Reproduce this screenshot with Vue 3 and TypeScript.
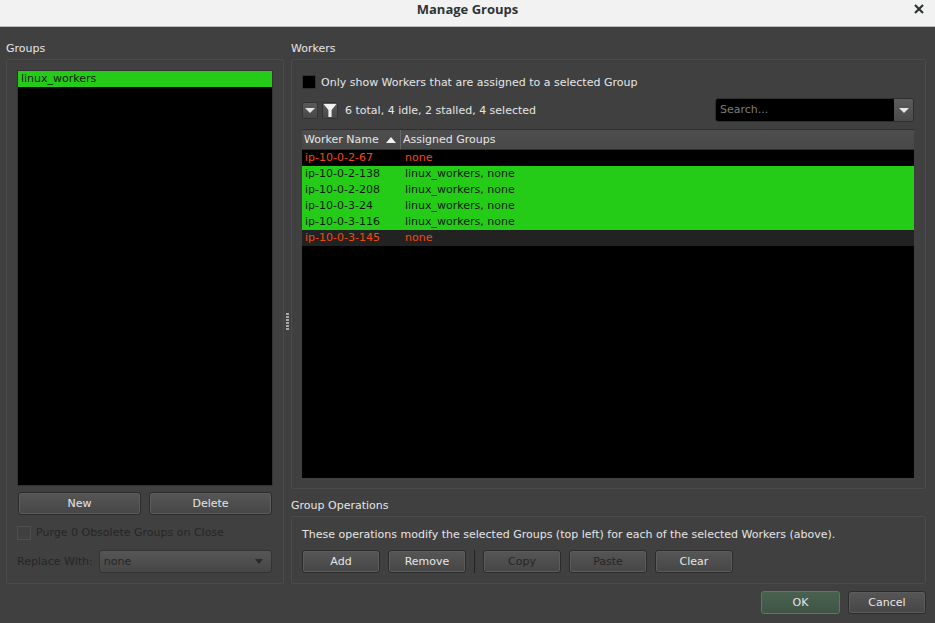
<script setup lang="ts">
interface Worker {
  name: string
  groups: string
  state: 'stalled' | 'selected'
  alt?: boolean
}

const workers: Worker[] = [
  { name: 'ip-10-0-2-67', groups: 'none', state: 'stalled' },
  { name: 'ip-10-0-2-138', groups: 'linux_workers, none', state: 'selected' },
  { name: 'ip-10-0-2-208', groups: 'linux_workers, none', state: 'selected' },
  { name: 'ip-10-0-3-24', groups: 'linux_workers, none', state: 'selected' },
  { name: 'ip-10-0-3-116', groups: 'linux_workers, none', state: 'selected' },
  { name: 'ip-10-0-3-145', groups: 'none', state: 'stalled', alt: true },
]
</script>

<template>
  <div class="dialog">
    <header class="titlebar">
      <span class="title">Manage Groups</span>
      <svg class="close" width="10" height="10" viewBox="0 0 10 10">
        <path d="M1 1 L9 9 M9 1 L1 9" stroke="#2e3436" stroke-width="2.2" fill="none" />
      </svg>
    </header>

    <div class="content">
      <div class="main">
        <section class="left">
          <div class="label">Groups</div>
          <div class="panel left-panel">
            <div class="group-list">
              <div class="group-row">linux_workers</div>
            </div>
            <div class="btn-row">
              <button class="btn grow">New</button>
              <button class="btn grow">Delete</button>
            </div>
            <div class="purge">
              <span class="check check-off"></span>
              <span class="off">Purge 0 Obsolete Groups on Close</span>
            </div>
            <div class="replace">
              <span class="off">Replace With:</span>
              <div class="combo">
                <span>none</span>
                <span class="tri tri-dim"></span>
              </div>
            </div>
          </div>
        </section>

        <div class="splitter">
          <i v-for="n in 6" :key="n"></i>
        </div>

        <section class="right">
          <div class="label">Workers</div>
          <div class="panel workers-panel">
            <div class="only">
              <span class="check"></span>
              <span>Only show Workers that are assigned to a selected Group</span>
            </div>
            <div class="toolbar">
              <button class="tool"><span class="tri"></span></button>
              <button class="tool">
                <svg width="14" height="14" viewBox="0 0 14 14">
                  <path d="M0.5 1 H13.5 L8.6 7 V14 H5.4 V7 Z" fill="#f0f0f0" />
                </svg>
              </button>
              <span class="stats">6 total, 4 idle, 2 stalled, 4 selected</span>
              <div class="search">
                <span class="search-input">Search...</span>
                <span class="search-btn"><span class="tri"></span></span>
              </div>
            </div>
            <div class="table">
              <div class="thead">
                <div class="th th-name">
                  <span>Worker Name</span>
                  <span class="tri tri-up"></span>
                </div>
                <div class="th">Assigned Groups</div>
              </div>
              <div
                v-for="w in workers"
                :key="w.name"
                class="tr"
                :class="[w.state, { alt: w.alt }]"
              >
                <div class="td-name">{{ w.name }}</div>
                <div class="td-groups">{{ w.groups }}</div>
              </div>
            </div>
          </div>

          <div class="label ops-label">Group Operations</div>
          <div class="panel ops-panel">
            <div class="ops-text">These operations modify the selected Groups (top left) for each of the selected Workers (above).</div>
            <div class="ops-row">
              <button class="btn ops">Add</button>
              <button class="btn ops">Remove</button>
              <span class="sep"></span>
              <button class="btn ops disabled">Copy</button>
              <button class="btn ops disabled">Paste</button>
              <button class="btn ops">Clear</button>
            </div>
          </div>
        </section>
      </div>

      <footer class="footer">
        <button class="btn foot ok">OK</button>
        <button class="btn foot">Cancel</button>
      </footer>
    </div>
  </div>
</template>

<style scoped>
.dialog {
  width: 935px;
  height: 623px;
  display: flex;
  flex-direction: column;
  overflow: hidden;
  background: #404040;
  color: #e6e6e6;
  font-family: "DejaVu Sans", sans-serif;
  font-size: 11px;
}

.titlebar {
  flex: none;
  height: 27px;
  box-sizing: border-box;
  position: relative;
  display: flex;
  align-items: center;
  justify-content: center;
  background: #f2f2f2;
  border-bottom: 1px solid #bdbdbd;
}

.title {
  font-family: "Open Sans", sans-serif;
  font-size: 13px;
  font-weight: 700;
  color: #2e3436;
  margin-top: -8px;
}

.close {
  position: absolute;
  right: 11px;
  top: 4px;
}

.content {
  flex: 1;
  display: flex;
  flex-direction: column;
  padding: 0 9px 0 6px;
}

.main {
  height: 557px;
  display: flex;
}

.left {
  width: 278px;
  display: flex;
  flex-direction: column;
}

.right {
  width: 635px;
  display: flex;
  flex-direction: column;
}

.splitter {
  width: 7px;
  display: flex;
  flex-direction: column;
  align-items: center;
  justify-content: center;
  gap: 1px;
  padding-top: 32px;
  box-sizing: border-box;
}

.splitter i {
  width: 3px;
  height: 2px;
  background: #a8a8a8;
}

.label {
  height: 32px;
  box-sizing: border-box;
  padding-top: 15px;
  line-height: 14px;
  color: #e6e6e6;
}

.ops-label {
  height: 27px;
  padding-top: 10px;
}

.panel {
  box-sizing: border-box;
  border: 1px solid #4b4b4b;
  border-radius: 2px;
}

.left-panel {
  flex: 1;
  padding: 10px 10px 0;
  display: flex;
  flex-direction: column;
}

.group-list {
  height: 416px;
  background: #000;
  border: 1px solid #333;
  box-sizing: border-box;
}

.group-row {
  height: 16px;
  line-height: 16px;
  padding-left: 3px;
  background: #24cc18;
  color: #0a1a08;
}

.btn-row {
  display: flex;
  gap: 8px;
  margin: 6px 1px 0;
}

.btn {
  box-sizing: border-box;
  height: 23px;
  padding: 0;
  font: inherit;
  color: #e6e6e6;
  background: linear-gradient(#565656, #464646);
  border: 1px solid #2c2c2c;
  border-radius: 3px;
  box-shadow: inset 0 0 0 1px #5c5c5c;
}

.grow {
  flex: 1;
}

.purge {
  display: flex;
  align-items: center;
  gap: 5px;
  margin-top: 10px;
  height: 15px;
}

.off {
  color: #262626;
}

.check {
  display: block;
  box-sizing: border-box;
  width: 14px;
  height: 14px;
  background: #000;
  border: 1px solid #333;
}

.check-off {
  background: #404040;
  border-color: #4f4f4f;
}

.replace {
  display: flex;
  align-items: center;
  gap: 6px;
  margin-top: 10px;
}

.combo {
  box-sizing: border-box;
  flex: 1;
  height: 23px;
  display: flex;
  align-items: center;
  justify-content: space-between;
  padding: 0 8px 0 4px;
  color: #262626;
  background: linear-gradient(#565656, #464646);
  border: 1px solid #333;
  border-radius: 3px;
  margin-right: 1px;
}

.tri {
  display: block;
  width: 0;
  height: 0;
  border-left: 5px solid transparent;
  border-right: 5px solid transparent;
  border-top: 5px solid #e6e6e6;
}

.tri-dim {
  border-top-color: #2a2a2a;
  border-left-width: 4px;
  border-right-width: 4px;
}

.tri-up {
  border-top: 0;
  border-bottom: 6px solid #f0f0f0;
}

.workers-panel {
  height: 430px;
  padding: 15px 11px 0 10px;
}

.only {
  display: flex;
  align-items: center;
  gap: 5px;
  height: 14px;
}

.toolbar {
  position: relative;
  display: flex;
  align-items: center;
  gap: 4px;
  height: 24px;
  margin-top: 9px;
}

.tool {
  box-sizing: border-box;
  width: 16px;
  height: 17px;
  padding: 0;
  display: flex;
  align-items: center;
  justify-content: center;
  background: linear-gradient(#5a5a5a, #484848);
  border: 1px solid #333;
  border-radius: 2px;
}

.stats {
  margin-left: 3px;
}

.search {
  margin-left: auto;
  width: 199px;
  height: 24px;
  display: flex;
  box-sizing: border-box;
  border: 1px solid #2e2e2e;
  border-radius: 3px;
  overflow: hidden;
}

.search-input {
  flex: 1;
  background: #000;
  color: #7c7c7c;
  line-height: 22px;
  padding-left: 4px;
}

.search-btn {
  width: 19px;
  display: flex;
  align-items: center;
  justify-content: center;
  background: linear-gradient(#5c5c5c, #4a4a4a);
}

.table {
  height: 349px;
  margin-top: 7px;
  background: #000;
}

.thead {
  display: flex;
  height: 21px;
  box-sizing: border-box;
  background: linear-gradient(#4e4e4e, #484848);
  border-top: 1px solid #2e2e2e;
  border-bottom: 1px solid #2e2e2e;
}

.th {
  display: flex;
  align-items: center;
  padding-left: 2px;
}

.th-name {
  width: 99px;
  box-sizing: border-box;
  justify-content: space-between;
  padding-right: 4px;
  border-right: 1px solid #666;
}

.tr {
  display: flex;
  height: 16px;
  line-height: 16px;
}

.td-name {
  width: 103px;
  box-sizing: border-box;
  padding-left: 3px;
}

.stalled {
  color: #f04a10;
}

.stalled.alt {
  background: #222;
}

.selected {
  background: #24cc18;
  color: #0a1a08;
}

.ops-panel {
  height: 68px;
  padding: 10px 10px 0;
}

.ops-text {
  line-height: 16px;
}

.ops-row {
  display: flex;
  align-items: center;
  gap: 8px;
  margin-top: 7px;
}

.ops {
  width: 78px;
}

.sep {
  width: 1px;
  height: 23px;
  background: #222;
}

.disabled {
  color: #262626;
}

.footer {
  display: flex;
  justify-content: flex-end;
  gap: 8px;
  padding-top: 7px;
}

.foot {
  width: 78px;
}

.ok {
  width: 79px;
  border-color: #2f9a28;
  box-shadow: none;
  background: linear-gradient(#4a6150, #3f5445);
}
</style>

<style>
html,
body {
  margin: 0;
  background: #404040;
}
</style>
